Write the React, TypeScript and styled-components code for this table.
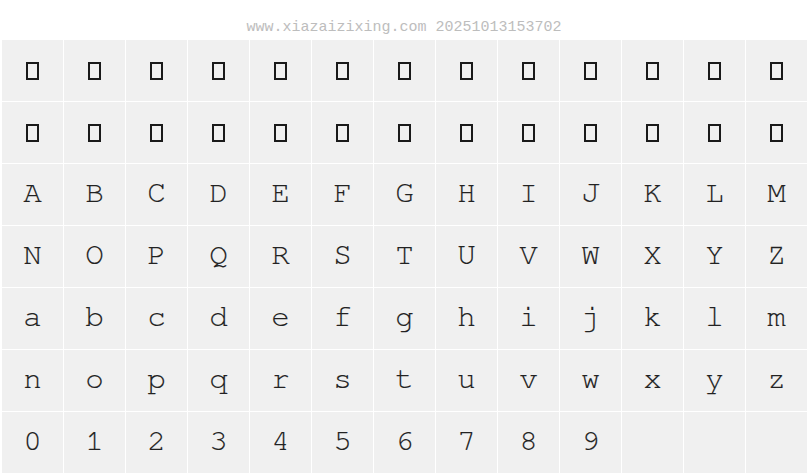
import * as React from 'react';
import styled, { createGlobalStyle } from 'styled-components';

const GlobalStyle = createGlobalStyle`
  html, body {
    margin: 0;
    padding: 0;
    background: #ffffff;
  }
`

const Page = styled.div`
  width: 808px;
  height: 476px;
  overflow: hidden;
  background: #ffffff;
`

const Header = styled.div`
  box-sizing: border-box;
  height: 40px;
  padding-top: 19px;
  text-align: center;
  font-family: "Liberation Mono", "DejaVu Sans Mono", monospace;
  font-size: 15px;
  line-height: 17px;
  color: #bdbdbd;
`

const Grid = styled.div`
  display: grid;
  grid-template-columns: repeat(13, 61px);
  grid-auto-rows: 61px;
  gap: 1px;
  padding-left: 2px;
`

const Cell = styled.div`
  box-sizing: border-box;
  display: flex;
  align-items: center;
  justify-content: center;
  padding-bottom: 4px;
  background: #f0f0f0;
  font-family: "Nimbus Mono PS", "Nimbus Mono L", "FreeMono", "Courier 10 Pitch", "DejaVu Serif", serif;
  font-size: 31px;
  line-height: 40px;
  color: #222222;
  -webkit-text-stroke: 0.15px #222222;
`

const Tofu = styled.span`
  box-sizing: border-box;
  display: block;
  width: 13px;
  height: 18px;
  margin-top: 4px;
  border: 2px solid #1a1a1a;
`

const upper = 'ABCDEFGHIJKLMNOPQRSTUVWXYZ'.split('')
const lower = 'abcdefghijklmnopqrstuvwxyz'.split('')
const digits = '0123456789'.split('')

const App = () => {
  const glyphs: (string | null)[] = [
    ...Array(26).fill(null),
    ...upper,
    ...lower,
    ...digits,
    '', '', '',
  ]

  return (
    <Page>
      <GlobalStyle />
      <Header>www.xiazaizixing.com 20251013153702</Header>
      <Grid>
        {glyphs.map((g, i) => (
          <Cell key={i}>
            {g === null ? <Tofu aria-label="missing glyph" /> : g}
          </Cell>
        ))}
      </Grid>
    </Page>
  );
}

export default App;
